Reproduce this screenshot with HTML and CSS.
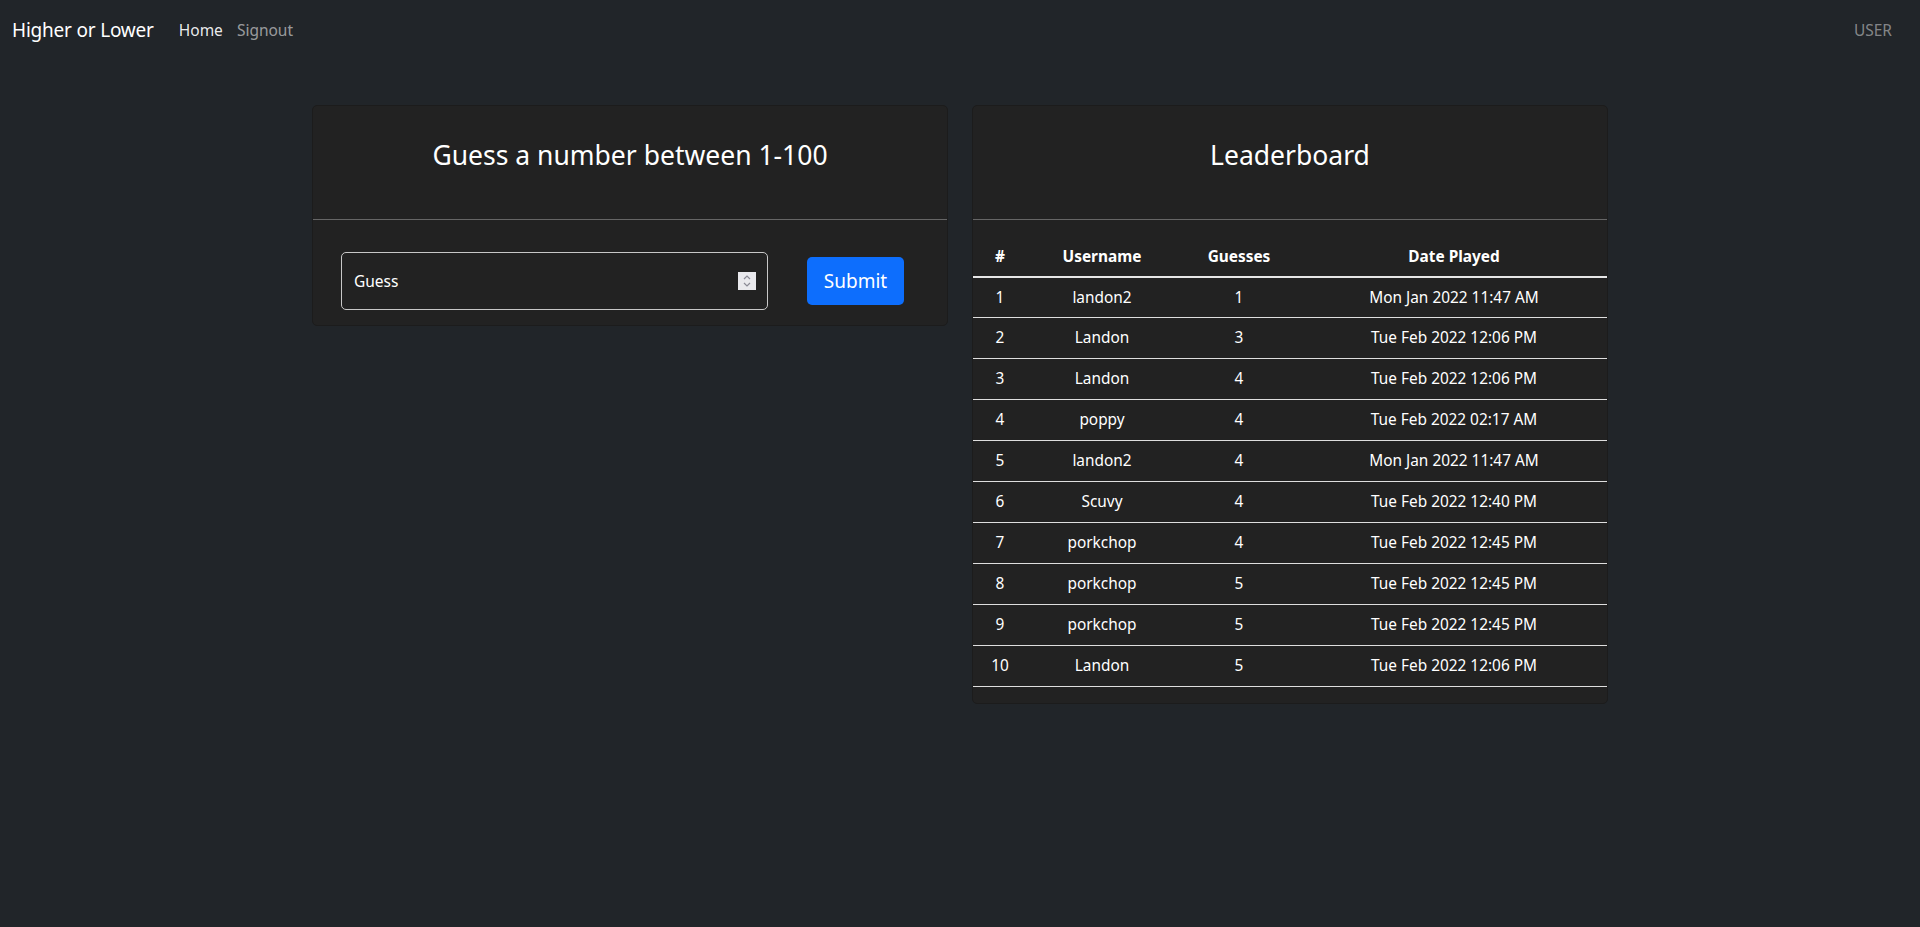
FILE: index.html
```html
<!DOCTYPE html>
<html lang="en">
<head>
<meta charset="utf-8">
<title>Higher or Lower</title>
<link rel="stylesheet" href="styles.css">
</head>
<body>
<nav class="navbar">
  <div class="nav-left">
    <a class="brand">Higher or Lower</a>
    <a class="nav-link active">Home</a>
    <a class="nav-link">Signout</a>
  </div>
  <span class="nav-user">USER</span>
</nav>
<main class="main">
  <section class="card card-guess">
    <div class="card-header"><h2 class="card-title">Guess a number between 1-100</h2></div>
    <div class="guess-body">
      <div class="guess-input">
        <span class="guess-placeholder">Guess</span>
        <span class="spinner">
          <svg width="10" height="14" viewBox="0 0 10 14"><path d="M2 5 L5 2 L8 5 M2 9 L5 12 L8 9" fill="none" stroke="#8a8a95" stroke-width="1.2"/></svg>
        </span>
      </div>
      <button class="btn-submit">Submit</button>
    </div>
  </section>
  <section class="card card-board">
    <div class="card-header"><h2 class="card-title">Leaderboard</h2></div>
    <div class="board-body">
      <table class="board">
        <thead>
          <tr><th class="c-num">#</th><th class="c-user">Username</th><th class="c-guess">Guesses</th><th class="c-date">Date Played</th></tr>
        </thead>
        <tbody>
          <tr><td>1</td><td>landon2</td><td>1</td><td>Mon Jan 2022 11:47 AM</td></tr>
          <tr><td>2</td><td>Landon</td><td>3</td><td>Tue Feb 2022 12:06 PM</td></tr>
          <tr><td>3</td><td>Landon</td><td>4</td><td>Tue Feb 2022 12:06 PM</td></tr>
          <tr><td>4</td><td>poppy</td><td>4</td><td>Tue Feb 2022 02:17 AM</td></tr>
          <tr><td>5</td><td>landon2</td><td>4</td><td>Mon Jan 2022 11:47 AM</td></tr>
          <tr><td>6</td><td>Scuvy</td><td>4</td><td>Tue Feb 2022 12:40 PM</td></tr>
          <tr><td>7</td><td>porkchop</td><td>4</td><td>Tue Feb 2022 12:45 PM</td></tr>
          <tr><td>8</td><td>porkchop</td><td>5</td><td>Tue Feb 2022 12:45 PM</td></tr>
          <tr><td>9</td><td>porkchop</td><td>5</td><td>Tue Feb 2022 12:45 PM</td></tr>
          <tr><td>10</td><td>Landon</td><td>5</td><td>Tue Feb 2022 12:06 PM</td></tr>
        </tbody>
      </table>
    </div>
  </section>
</main>
</body>
</html>
```
FILE: styles.css
```css
* { box-sizing: border-box; }
html, body { margin: 0; padding: 0; }
body {
  background: #212529;
  color: #fff;
  font-family: "Noto Sans", "Open Sans", sans-serif;
  min-height: 927px;
}
.navbar {
  height: 60px;
  display: flex;
  align-items: center;
  justify-content: space-between;
  padding: 0 28px 0 12px;
}
.nav-left { display: flex; align-items: center; }
.brand {
  font-size: 19px;
  color: #fff;
  margin-right: 25px;
  letter-spacing: -0.2px;
}
.nav-link {
  font-size: 15.5px;
  color: rgba(255,255,255,.55);
  margin-right: 14px;
}
.nav-link.active { color: rgba(255,255,255,.92); }
.nav-user { font-size: 15.5px; color: rgba(255,255,255,.45); }

.main {
  display: flex;
  align-items: flex-start;
  gap: 24px;
  padding: 45px 0 0 312px;
}
.card {
  width: 636px;
  background: #222222;
  border: 1px solid #1c1c1c;
  border-radius: 5px;
}
.card-header {
  border-bottom: 1px solid #666666;
  padding: 30px 16px 45px;
  text-align: center;
}
.card-title {
  margin: 0;
  font-weight: 400;
  font-size: 26.5px;
  line-height: 38px;
  color: #fff;
}
.guess-body {
  display: flex;
  align-items: center;
  gap: 39px;
  padding: 32px 0 15px 28px;
}
.guess-input {
  width: 427px;
  height: 58px;
  border: 1px solid #c8c8c8;
  border-radius: 5px;
  display: flex;
  align-items: center;
  justify-content: space-between;
  padding: 0 11px 0 12px;
}
.guess-placeholder { font-size: 15.5px; color: #fff; }
.spinner {
  width: 18px;
  height: 18px;
  background: #e9e9ed;
  display: flex;
  align-items: center;
  justify-content: center;
}
.btn-submit {
  width: 97px;
  height: 48px;
  background: #0d6efd;
  border: none;
  border-radius: 5px;
  color: #fff;
  font-family: inherit;
  font-size: 19px;
  padding: 0;
}
.board-body { padding: 16px 0; }
.board {
  width: 100%;
  border-collapse: collapse;
  font-size: 15.4px;
  text-align: center;
}
.board th {
  font-weight: 700;
  height: 41px;
  border-bottom: 2px solid #e6e6e6;
  padding: 0;
}
.board td {
  height: 41px;
  border-bottom: 1px solid #dedede;
  padding: 0;
}
.board tbody tr:first-child td { height: 40px; }
.c-num { width: 54px; }
.c-user { width: 150px; }
.c-guess { width: 124px; }
.c-date { width: 306px; }
```
